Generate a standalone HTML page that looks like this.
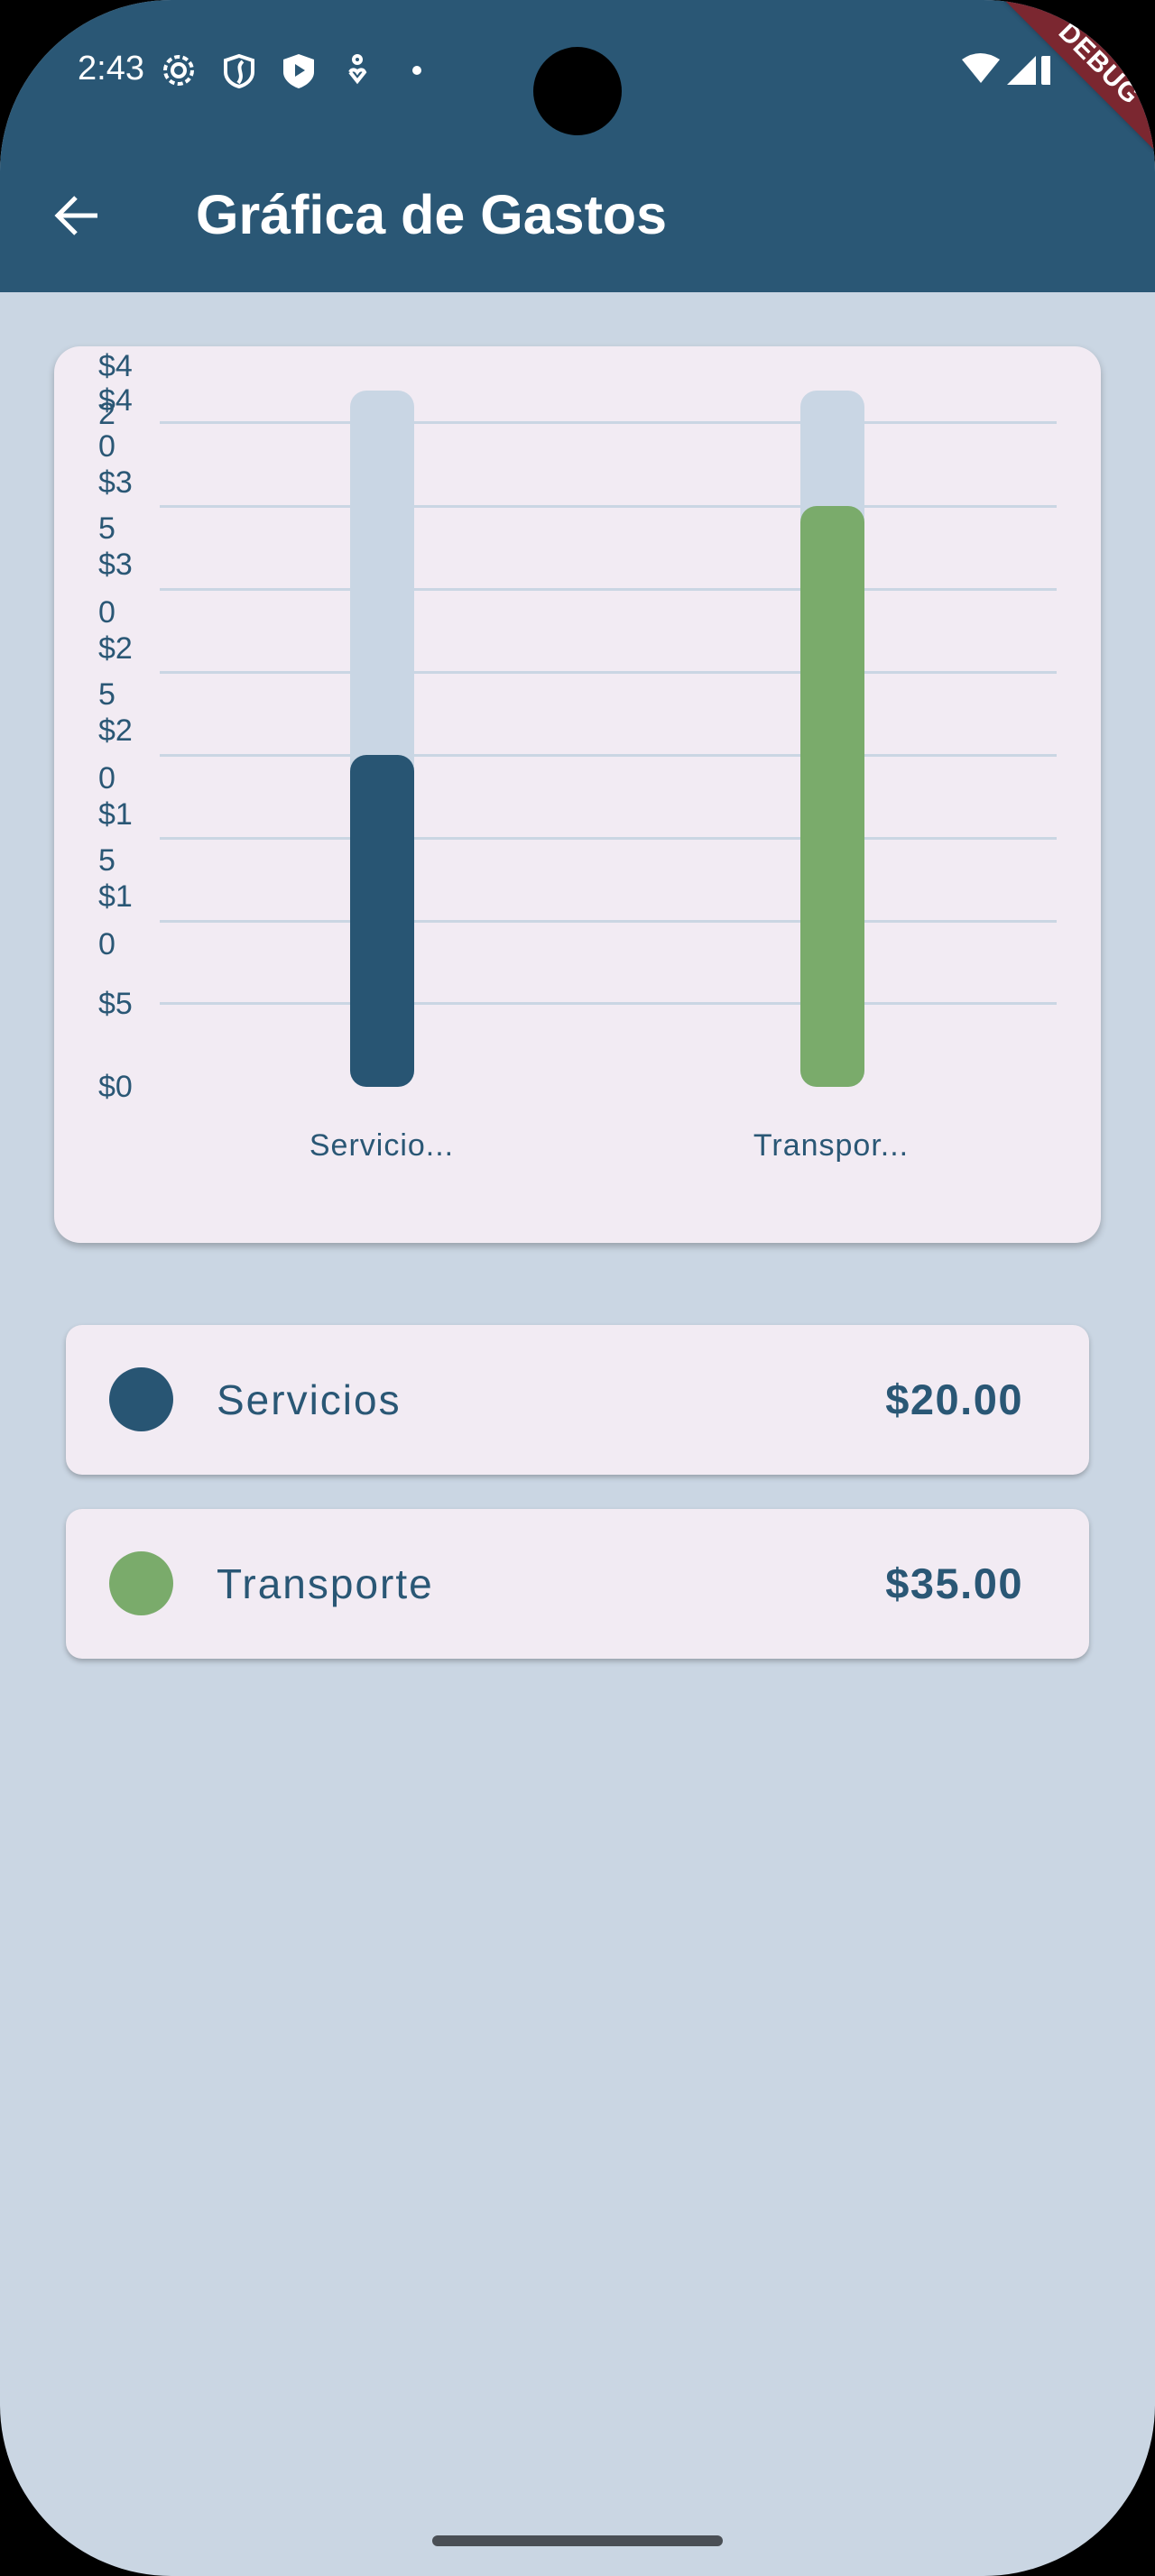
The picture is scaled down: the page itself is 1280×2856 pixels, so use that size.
<!DOCTYPE html>
<html><head><meta charset="utf-8"><style>
*{margin:0;padding:0;box-sizing:border-box}
html,body{width:1280px;height:2856px;background:#000;overflow:hidden}
body{font-family:"Liberation Sans",sans-serif;position:relative}
#screen{position:absolute;left:0;top:0;width:1280px;height:2856px;background:#cad6e3;border-radius:190px;overflow:hidden}
#bar{position:absolute;left:0;top:0;width:1280px;height:324px;background:#2a5775}
.abs{position:absolute}
.card{position:absolute;background:#f2ebf3;box-shadow:0 4px 8px rgba(0,0,0,0.25)}
.grid{position:absolute;left:177px;width:994px;height:3px;background:#cad6e3}
.yl{position:absolute;left:109px;font-size:34px;color:#2a5775;line-height:34px;height:34px;margin-top:-17px}
.legend{position:absolute;left:73px;width:1134px;height:166px;background:#f2ebf3;border-radius:18px;box-shadow:0 3px 6px rgba(0,0,0,0.25)}
.dot{position:absolute;left:48px;top:47px;width:71px;height:71px;border-radius:50%}
.lt{position:absolute;left:167px;top:0;line-height:166px;font-size:46px;color:#2a5775;font-weight:500;letter-spacing:2px}
.la{position:absolute;right:73px;top:0;line-height:166px;font-size:47px;color:#2a5775;font-weight:bold;letter-spacing:1.5px}
.bl{position:absolute;top:1250px;width:300px;text-align:center;font-size:34px;color:#2a5775;line-height:40px;letter-spacing:1px}
</style></head><body>
<div id="screen">
<div id="bar"></div>
<div class="abs" style="left:86px;top:54px;font-size:38px;color:#fff;line-height:44px">2:43</div>
<svg class="abs" style="left:176px;top:56px" width="300" height="44" viewBox="0 0 300 44">
<g fill="none" stroke="#fff" stroke-width="4">
<circle cx="22" cy="22" r="7"/><circle cx="22" cy="22" r="15" stroke-dasharray="6 3.4"/>
<path d="M89 6 L104 11 V24 C104 32 97 38 89 40 C81 38 74 32 74 24 V11 Z"/><path d="M93 12 C84 20 96 26 88 36"/>
<circle cx="220" cy="10" r="4"/><path d="M212 24 L220 34 L228 24 C226 20 222 21 220 24 C218 21 214 20 212 24"/>
</g>
<path fill="#fff" d="M155 4 L172 10 V24 C172 32 164 39 155 42 C146 39 138 32 138 24 V10 Z"/>
<path fill="#2a5775" d="M151 15 L162 22 L151 29 Z"/>
<circle fill="#fff" cx="286" cy="22" r="5"/>
</svg>
<div class="abs" style="left:591px;top:52px;width:98px;height:98px;border-radius:50%;background:#000"></div>
<svg class="abs" style="left:1064px;top:56px" width="100" height="40" viewBox="0 0 100 40">
<path fill="#fff" d="M2 10 Q22 -4 44 10 L23 36 Z"/>
<path fill="#fff" d="M52 38 L84 6 V38 Z"/>
<rect fill="#fff" x="90" y="6" width="14" height="32" rx="2"/>
</svg>
<div class="abs" style="left:1058px;top:47px;width:320px;height:48px;background:#7b2730;transform:rotate(45deg);color:#fff;font-weight:bold;font-size:30px;text-align:center;line-height:48px;letter-spacing:1px;box-shadow:0 0 6px rgba(0,0,0,0.3)">DEBUG</div>
<svg class="abs" style="left:56px;top:214px" width="56" height="50" viewBox="0 0 56 50"><path d="M52 25 H8 M28 5 L8 25 L28 45" fill="none" stroke="#fff" stroke-width="5"/></svg>
<div class="abs" style="left:217px;top:200px;font-size:61px;font-weight:bold;color:#fff;line-height:76px">Gráfica de Gastos</div>

<div class="card" style="left:60px;top:384px;width:1160px;height:994px;border-radius:29px"></div>
<div class="grid" style="top:467px"></div>
<div class="grid" style="top:560px"></div>
<div class="grid" style="top:652px"></div>
<div class="grid" style="top:744px"></div>
<div class="grid" style="top:836px"></div>
<div class="grid" style="top:928px"></div>
<div class="grid" style="top:1020px"></div>
<div class="grid" style="top:1111px"></div>
<div class="abs" style="left:388px;top:433px;width:71px;height:772px;background:#c9d6e4;border-radius:18px"></div>
<div class="abs" style="left:388px;top:837px;width:71px;height:368px;background:#285573;border-radius:18px"></div>
<div class="abs" style="left:887px;top:433px;width:71px;height:772px;background:#c9d6e4;border-radius:18px"></div>
<div class="abs" style="left:887px;top:561px;width:71px;height:644px;background:#7aab6b;border-radius:18px"></div>
<div class="yl" style="top:406px">$4</div>
<div class="yl" style="top:459px">2</div>
<div class="yl" style="top:444px">$4</div>
<div class="yl" style="top:495px">0</div>
<div class="yl" style="top:535px">$3</div>
<div class="yl" style="top:586px">5</div>
<div class="yl" style="top:626px">$3</div>
<div class="yl" style="top:679px">0</div>
<div class="yl" style="top:719px">$2</div>
<div class="yl" style="top:770px">5</div>
<div class="yl" style="top:810px">$2</div>
<div class="yl" style="top:863px">0</div>
<div class="yl" style="top:903px">$1</div>
<div class="yl" style="top:954px">5</div>
<div class="yl" style="top:994px">$1</div>
<div class="yl" style="top:1047px">0</div>
<div class="yl" style="top:1113px">$5</div>
<div class="yl" style="top:1205px">$0</div>
<div class="bl" style="left:273px">Servicio...</div>
<div class="bl" style="left:771px">Transpor...</div>

<div class="legend" style="top:1469px"><div class="dot" style="background:#285573"></div><div class="lt">Servicios</div><div class="la">$20.00</div></div>
<div class="legend" style="top:1673px"><div class="dot" style="background:#7aab6b"></div><div class="lt">Transporte</div><div class="la">$35.00</div></div>

<div class="abs" style="left:479px;top:2811px;width:322px;height:12px;border-radius:6px;background:#4a4f55"></div>
</div>
</body></html>
